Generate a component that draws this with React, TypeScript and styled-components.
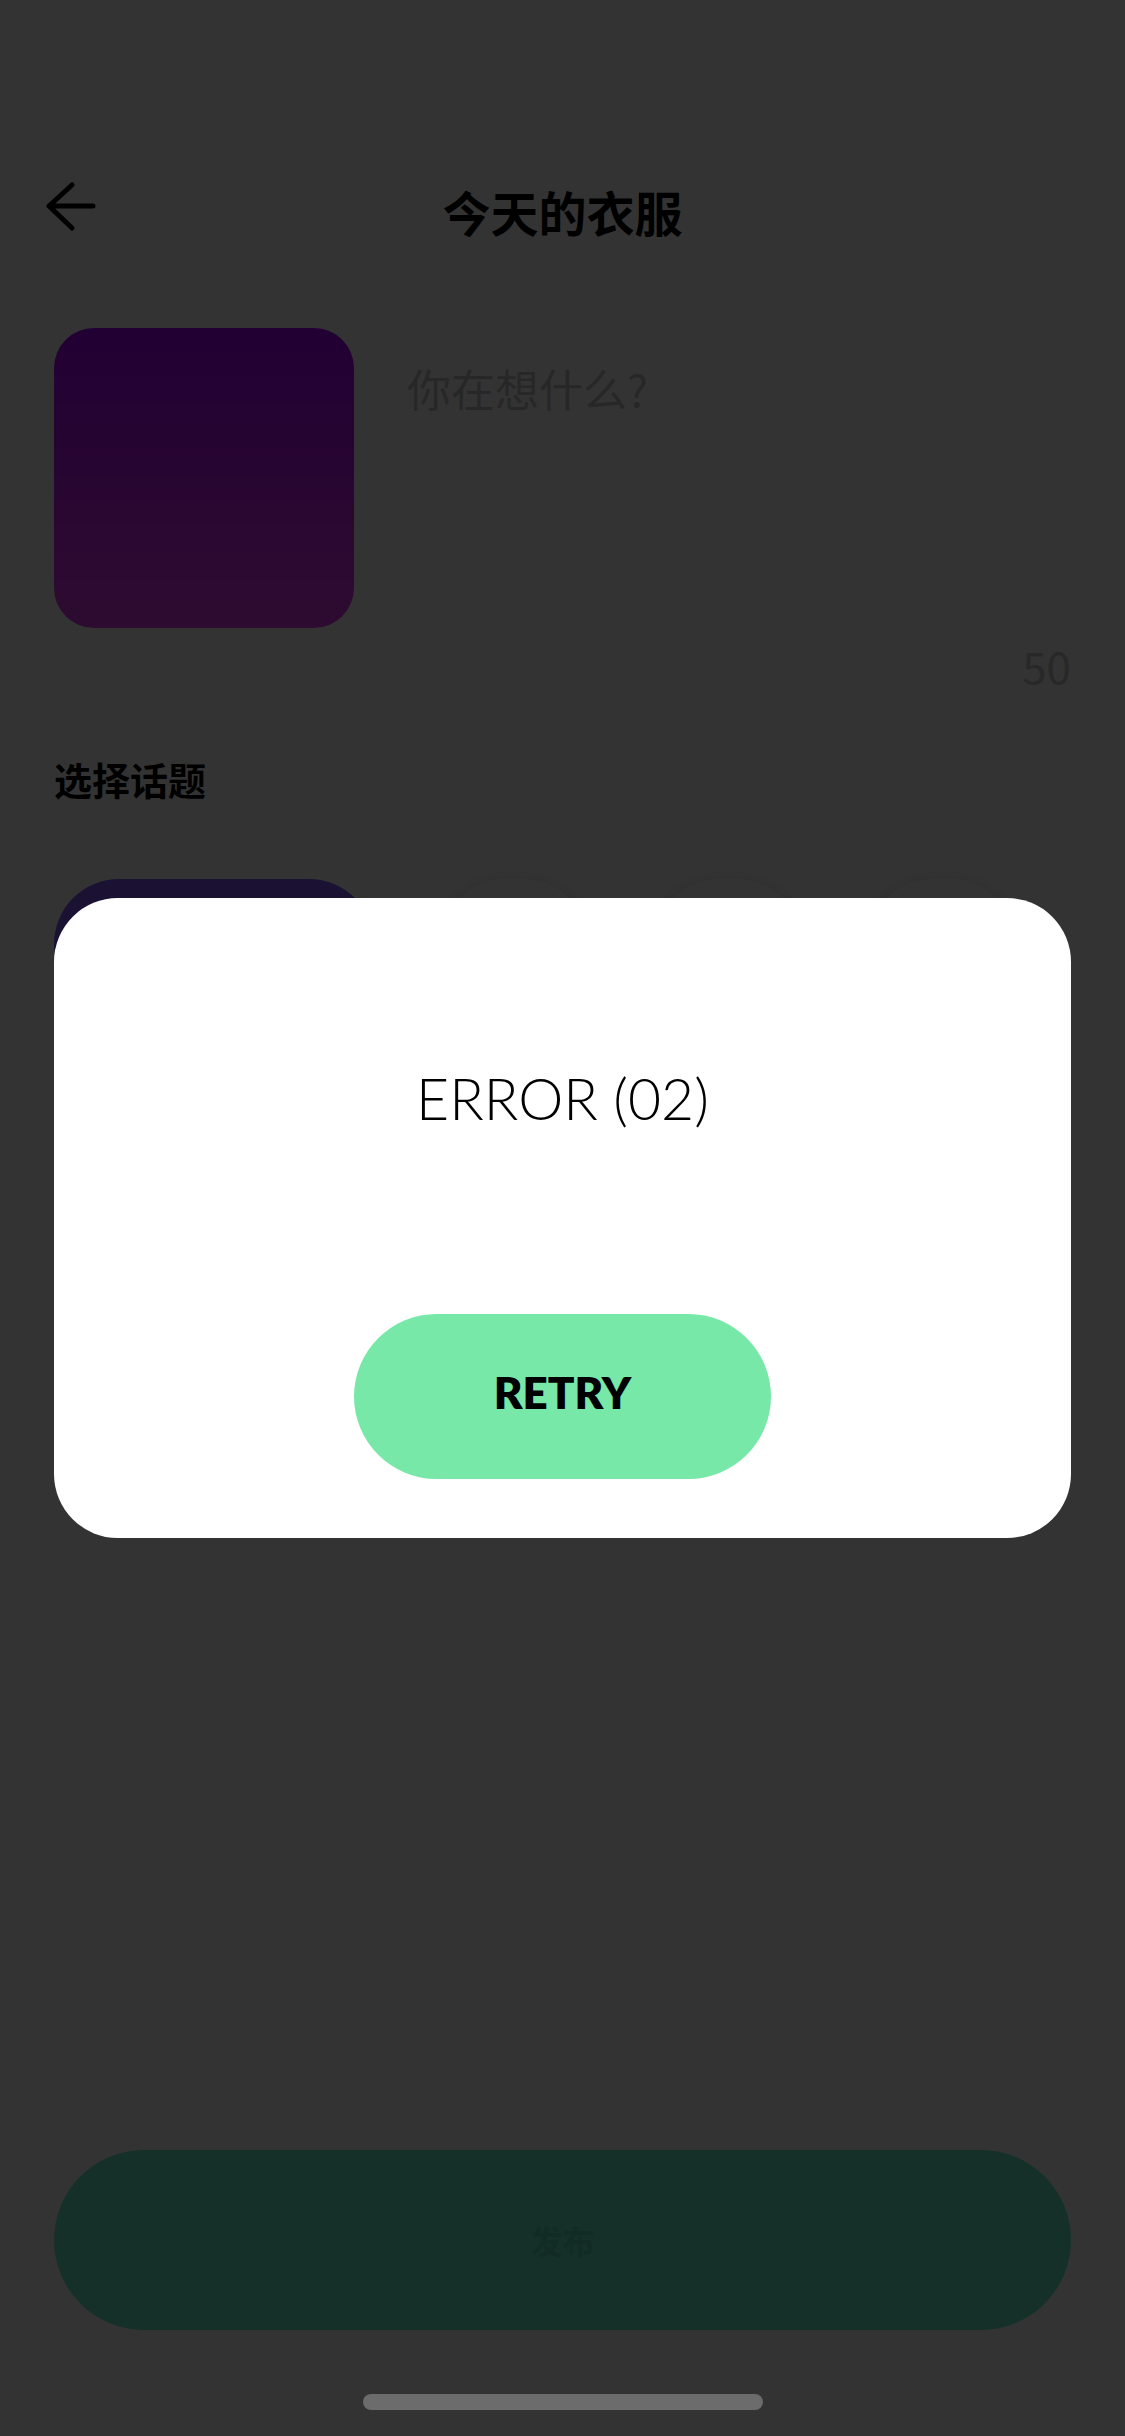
import React from 'react';
import styled, { createGlobalStyle } from 'styled-components';

const GlobalStyle = createGlobalStyle`
  html, body {
    margin: 0;
    padding: 0;
    background: #ffffff;
    font-family: 'Noto Sans CJK SC', 'Noto Sans', sans-serif;
  }
  * { box-sizing: border-box; }
`;

const topics = [
  { id: 'main', wide: true },
  { id: 't1', wide: false },
  { id: 't2', wide: false },
  { id: 't3', wide: false },
];

const Page = styled.div`
  min-height: 100vh;
  display: flex;
  flex-direction: column;
  padding: 0 54px;
  background: #ffffff;
`;

const Header = styled.header`
  margin-top: 160px;
  height: 110px;
  display: grid;
  grid-template-columns: 1fr auto 1fr;
  align-items: center;
`;

const BackButton = styled.button`
  align-self: start;
  margin: 20px 0 0 -10px;
  padding: 0;
  border: none;
  background: none;
  width: 52px;
  height: 54px;
  justify-self: start;
`;

const Title = styled.h1`
  margin: -6px 0 0;
  font-size: 48px;
  line-height: 1.2;
  font-weight: 700;
  color: #000;
`;

const Compose = styled.div`
  margin-top: 58px;
  display: flex;
  gap: 53px;
`;

const Thumb = styled.div`
  width: 300px;
  height: 300px;
  flex-shrink: 0;
  border-radius: 40px;
  background: linear-gradient(180deg, #a800ff 0%, #e23cf0 100%);
`;

const Placeholder = styled.div`
  margin-top: 30px;
  font-size: 44px;
  line-height: 1.4;
  color: #c4c4c4;
`;

const Counter = styled.div`
  margin-top: 11px;
  text-align: right;
  font-size: 44px;
  line-height: 1.2;
  color: #c8c8c8;
`;

const SectionLabel = styled.h2`
  margin: 60px 0 0;
  font-size: 38px;
  line-height: 1.4;
  font-weight: 700;
  color: #000;
`;

const TopicRow = styled.div`
  margin-top: 74px;
  display: flex;
  gap: 66px;
`;

const Topic = styled.div<{ $wide: boolean }>`
  width: ${p => (p.$wide ? '320px' : '148px')};
  height: 130px;
  flex-shrink: 0;
  border-radius: 65px;
  background: ${p => (p.$wide ? '#8058ff' : '#ffffff')};
  box-shadow: ${p => (p.$wide ? 'none' : '0 4px 18px rgba(0, 0, 0, 0.16)')};
`;

const Spacer = styled.div`
  flex: 1;
`;

const PublishButton = styled.button`
  margin-bottom: 106px;
  height: 180px;
  width: 100%;
  border: none;
  border-radius: 90px;
  background: #64eec8;
  font-family: 'Noto Sans CJK SC', sans-serif;
  font-size: 32px;
  font-weight: 700;
  color: #5ad9b6;
`;

const Backdrop = styled.div`
  position: fixed;
  inset: 0;
  background: rgba(0, 0, 0, 0.8);
  display: flex;
  align-items: center;
  justify-content: center;
`;

const Dialog = styled.div`
  width: 1017px;
  height: 640px;
  border-radius: 64px;
  background: #ffffff;
  display: flex;
  flex-direction: column;
  align-items: center;
  padding-top: 166px;
`;

const ErrorText = styled.p`
  margin: 0;
  font-family: 'Lato', 'Liberation Sans', sans-serif;
  font-weight: 300;
  font-size: 57px;
  line-height: 1.2;
  color: #000;
`;

const RetryButton = styled.button`
  margin-top: 182px;
  width: 417px;
  height: 165px;
  padding: 0 0 10px;
  border: none;
  border-radius: 83px;
  background: #78e8a9;
  font-family: 'Lato', 'Liberation Sans', sans-serif;
  font-weight: 800;
  font-size: 44px;
  color: #000;
`;

const HomeIndicator = styled.div`
  position: fixed;
  left: 50%;
  bottom: 26px;
  transform: translateX(-50%);
  width: 400px;
  height: 16px;
  border-radius: 8px;
  background: #6c6c6c;
`;

const BackArrow = () => (
  <svg width="52" height="54" viewBox="0 0 52 54" fill="none">
    <path d="M49 26H5M28 5L5 26l23 22" stroke="#000" strokeWidth="5" strokeLinecap="round" strokeLinejoin="round" />
  </svg>
);

const App = () => {
  return (
    <>
      <GlobalStyle />
      <Page>
        <Header>
          <BackButton aria-label="back">
            <BackArrow />
          </BackButton>
          <Title>今天的衣服</Title>
          <div />
        </Header>

        <Compose>
          <Thumb />
          <Placeholder>你在想什么?</Placeholder>
        </Compose>
        <Counter>50</Counter>

        <SectionLabel>选择话题</SectionLabel>
        <TopicRow>
          {topics.map(t => (
            <Topic key={t.id} $wide={t.wide} />
          ))}
        </TopicRow>

        <Spacer />
        <PublishButton>发布</PublishButton>
      </Page>

      <Backdrop>
        <Dialog>
          <ErrorText>ERROR (02)</ErrorText>
          <RetryButton>RETRY</RetryButton>
        </Dialog>
      </Backdrop>
      <HomeIndicator />
    </>
  );
};

export default App;
